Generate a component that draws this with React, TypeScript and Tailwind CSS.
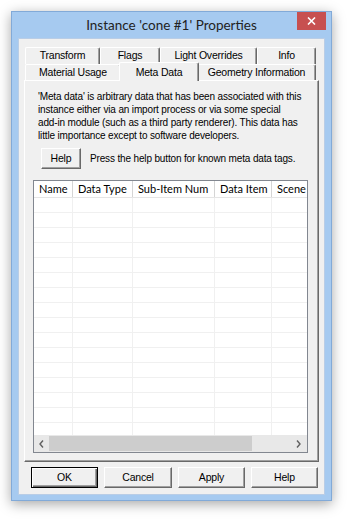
import React from 'react';

const dlgFont = { fontFamily: '"Liberation Sans", Arial, sans-serif' };
const titleFont = { fontFamily: 'Lato, "Noto Sans", sans-serif' };
const headFont = { fontFamily: 'Lato, "Noto Sans", sans-serif' };

const row1 = [
  { label: 'Transform', w: 'w-[75px]' },
  { label: 'Flags', w: 'w-[60px]' },
  { label: 'Light Overrides', w: 'w-[97px]' },
  { label: 'Info', w: 'w-[59px]' },
];

const columns = [
  { label: 'Name', w: 'w-[39px]' },
  { label: 'Data Type', w: 'w-[60px]' },
  { label: 'Sub-Item Num', w: 'w-[82px]' },
  { label: 'Data Item', w: 'w-[57px]' },
  { label: 'Scene', w: 'w-[50px]' },
];

function Tab({ label, w }: { label: string; w: string }) {
  return (
    <div
      className={`${w} h-full shrink-0 flex items-center justify-center border-t border-l border-r border-t-white border-l-white border-r-[#696969] shadow-[inset_-1px_0_0_#a0a0a0] rounded-t-[2px] text-[10.5px] tracking-[-0.2px] text-black`}
    >
      {label}
    </div>
  );
}

function ClassicButton({ label, isDefault, w }: { label: string; isDefault?: boolean; w: string }) {
  return (
    <button
      className={`${w} h-[21px] shrink-0 flex items-center justify-center bg-[#f0f0f0] text-[10.5px] tracking-[-0.2px] text-black ${
        isDefault
          ? 'border border-black shadow-[inset_1px_1px_0_#fff,inset_-1px_-1px_0_#696969,inset_-2px_-2px_0_#a0a0a0]'
          : 'border border-t-white border-l-white border-r-[#696969] border-b-[#696969] shadow-[inset_-1px_-1px_0_#a0a0a0]'
      }`}
    >
      {label}
    </button>
  );
}

export default function App() {
  const rows = Array.from({ length: 16 });

  return (
    <div className="w-[350px] h-[519px] bg-white overflow-hidden pt-[11px] pl-[11px]" style={dlgFont}>
      <div className="relative w-[321px] h-[490px] bg-[#a6caf0] border border-[#82aad8] shadow-[0_3px_12px_rgba(0,0,0,0.35)] flex flex-col">
        {/* title bar */}
        <div className="h-[26px] shrink-0 flex items-center justify-center pt-[1px]">
          <span className="text-[13.5px] text-[#222]" style={titleFont}>
            Instance 'cone #1' Properties
          </span>
        </div>
        <div className="absolute right-[5px] top-0 w-[29px] h-[18px] bg-[#c75050] flex items-center justify-center">
          <svg width="9" height="8" viewBox="0 0 9 8">
            <path d="M1 0.5 L8 7.5 M8 0.5 L1 7.5" stroke="#fff" strokeWidth="1.6" />
          </svg>
        </div>

        {/* client area */}
        <div className="mx-[6px] mb-[5px] flex-1 bg-[#f0f0f0] border border-[#b9cde6] flex flex-col pl-[5px] pt-[8px]">
          {/* tabs row 1 */}
          <div className="h-[17px] flex ml-[1px]">
            {row1.map((t) => (
              <Tab key={t.label} label={t.label} w={t.w} />
            ))}
          </div>
          {/* tabs row 2 */}
          <div className="h-[16px] flex items-start ml-[1px]">
            <Tab label="Material Usage" w="w-[96px]" />
            <div className="relative z-10 w-[80px] -mx-[2px] -mt-[2px] h-[19px] shrink-0 flex items-start justify-center pt-[2px] bg-[#f0f0f0] border-t border-l border-r border-t-white border-l-white border-r-[#696969] shadow-[inset_-1px_0_0_#a0a0a0] rounded-t-[2px] text-[10.5px] tracking-[-0.2px] text-black">
              Meta Data
            </div>
            <Tab label="Geometry Information" w="w-[119px]" />
          </div>

          {/* panel */}
          <div className="w-[295px] h-[382px] border border-t-white border-l-white border-r-[#696969] border-b-[#696969] shadow-[inset_-1px_-1px_0_#a0a0a0] flex flex-col pt-[9px]">
            <p className="ml-[13px] w-[276px] whitespace-nowrap text-[10px] tracking-[-0.15px] leading-[13px] text-black">
              'Meta data' is arbitrary data that has been associated with this
              <br />
              instance either via an import process or via some special
              <br />
              add-in module (such as a third party renderer). This data has
              <br />
              little importance except to software developers.
            </p>

            <div className="mt-[6px] ml-[16px] flex items-center gap-[9px]">
              <ClassicButton label="Help" w="w-[40px]" />
              <span className="text-[10px] tracking-[-0.15px] text-black whitespace-nowrap">
                Press the help button for known meta data tags.
              </span>
            </div>

            {/* list view */}
            <div className="mt-[11px] ml-[8px] w-[275px] h-[273px] border border-[#828790] bg-white flex flex-col overflow-hidden">
              <div className="h-[17px] shrink-0 flex border-b border-[#e5e5e5]" style={headFont}>
                {columns.map((c) => (
                  <div
                    key={c.label}
                    className={`${c.w} shrink-0 h-full border-r border-[#d5d5d5] flex items-center pl-[5px] text-[11px] text-black whitespace-nowrap overflow-hidden`}
                  >
                    {c.label}
                  </div>
                ))}
              </div>
              <div className="flex-1 overflow-hidden">
                {rows.map((_, i) => (
                  <div key={i} className="h-[15px] flex border-b border-[#f0f0f0]">
                    {columns.map((c) => (
                      <div key={c.label} className={`${c.w} shrink-0 h-full border-r border-[#f0f0f0]`} />
                    ))}
                  </div>
                ))}
              </div>
              {/* horizontal scrollbar */}
              <div className="h-[17px] shrink-0 flex bg-[#e8e8e8]">
                <div className="w-[15px] h-full flex items-center justify-center">
                  <svg width="5" height="8" viewBox="0 0 5 8">
                    <path d="M4 0.5 L1 4 L4 7.5" stroke="#606060" strokeWidth="1.4" fill="none" />
                  </svg>
                </div>
                <div className="w-[203px] h-[15px] my-[1px] bg-[#cdcdcd]" />
                <div className="flex-1" />
                <div className="w-[17px] h-full flex items-center justify-center">
                  <svg width="5" height="8" viewBox="0 0 5 8">
                    <path d="M1 0.5 L4 4 L1 7.5" stroke="#606060" strokeWidth="1.4" fill="none" />
                  </svg>
                </div>
              </div>
            </div>
          </div>

          {/* dialog buttons */}
          <div className="mt-[5px] ml-[7px] flex gap-[6px]">
            <ClassicButton label="OK" isDefault w="w-[67px]" />
            <ClassicButton label="Cancel" w="w-[68px]" />
            <ClassicButton label="Apply" w="w-[67px]" />
            <ClassicButton label="Help" w="w-[67px]" />
          </div>
        </div>
      </div>
    </div>
  );
}
